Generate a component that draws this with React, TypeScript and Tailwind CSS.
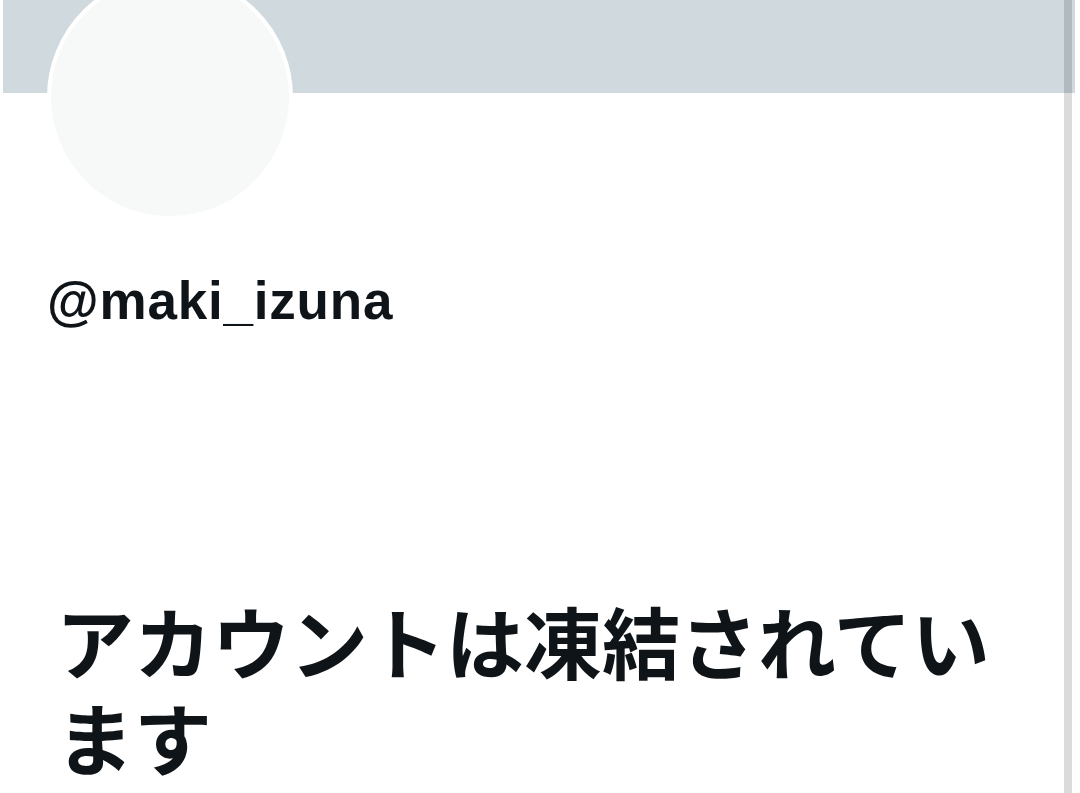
import React from "react";

const App = () => {
  return (
    <div className="relative min-h-[793px] w-[1080px] overflow-hidden bg-white pl-[3px] pr-[5px]">
      <div className="h-[93px] bg-[#cfd9de]" />
      <div className="flex flex-col pr-[11px]">
        <div className="-mt-[119px] ml-[44px] h-[246px] w-[246px] rounded-full border-4 border-white bg-[#f7f9f9]" />
        <p className="mt-[51px] ml-[44px] text-[53px] font-bold leading-[60px] tracking-[0.8px] text-[#0f1419] [font-family:'Liberation_Sans',Arial,sans-serif]">
          @maki_izuna
        </p>
        <h1 className="mt-[261px] ml-[53px] w-[970px] text-[78px] font-bold leading-[96px] text-[#0f1419] [font-family:'Noto_Sans_CJK_JP',sans-serif]">
          アカウントは凍結されています
        </h1>
      </div>
      <div className="absolute top-0 bottom-0 left-[1064px] w-[8px] bg-black/[0.14]" />
    </div>
  );
};

export default App;
